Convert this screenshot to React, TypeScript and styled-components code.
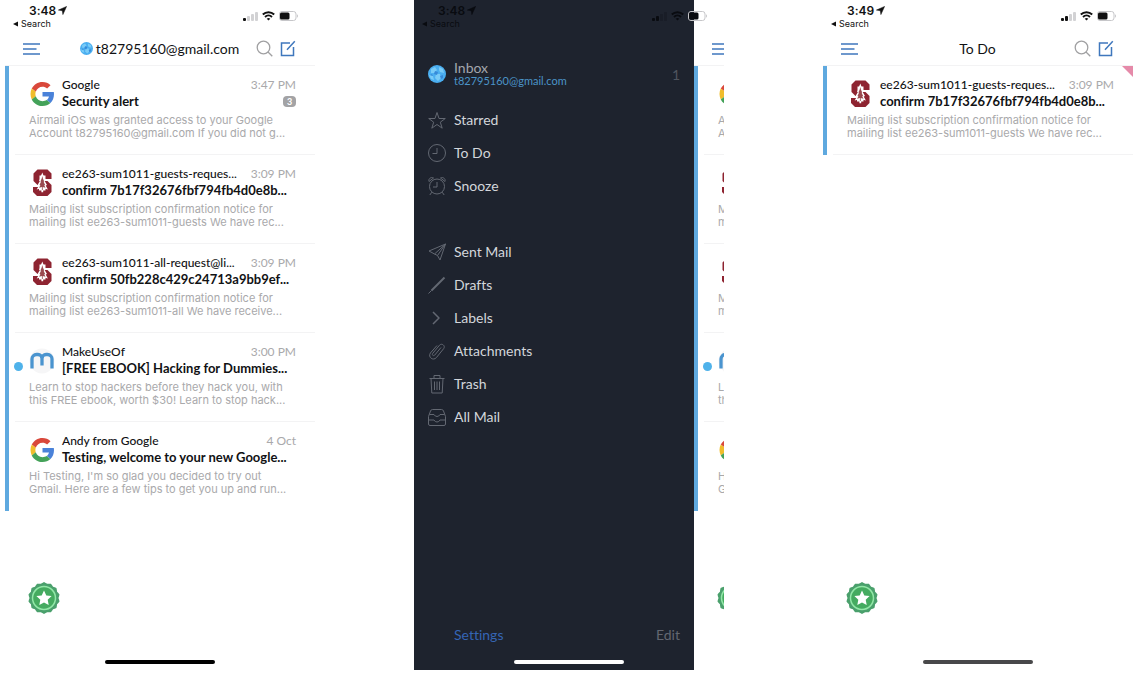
import React from "react";
import styled, { createGlobalStyle } from "styled-components";

const color = {
  accent: "#5fa9df",
  link: "#3f77bd",
  ink: "#111214",
  muted: "#a9a9ab",
  faint: "#f3f3f4",
  drawer: "#1e232e",
  drawerIcon: "#636872",
  drawerText: "#d3d6db",
};

const GlobalStyle = createGlobalStyle`
  *, *::before, *::after { box-sizing: border-box; }
  body {
    margin: 0;
    background: #fff;
    color: ${color.ink};
    font-family: Lato, "Liberation Sans", sans-serif;
    font-variant-ligatures: none;
  }
  ul { list-style: none; margin: 0; padding: 0; }
  button { border: 0; padding: 0; background: none; font: inherit; cursor: pointer; }
  h1, h2, h3, p { margin: 0; font: inherit; }
  svg { display: block; flex-shrink: 0; }
  a { color: inherit; text-decoration: none; }
`;

const Gallery = styled.main`
  display: grid;
  grid-template-columns: repeat(3, minmax(0, 1fr));
  gap: 99px;
  padding: 0 15px 14px 5px;
  min-height: 100vh;
`;

const Phone = styled.section`
  position: relative;
  display: flex;
  min-width: 0;
`;

const Screen = styled.div`
  display: flex;
  flex-direction: column;
  flex: 1 1 0;
  min-width: 0;
`;

const StatusRow = styled.div<{ $overlay?: boolean }>`
  display: flex;
  justify-content: space-between;
  height: 32px;
  padding: 4px 16px 0 8px;
  color: #111;
  font-family: Inter, "Liberation Sans", sans-serif;
  ${(p) => p.$overlay && "position: absolute; inset: 0 0 auto 0; z-index: 2; color: #090b10;"}
`;

const Clock = styled.div`
  display: flex;
  align-items: center;
  gap: 2px;
  padding-left: 16px;
  font-size: 12px;
  font-weight: 600;
  line-height: 13px;
`;

const BackLink = styled.a`
  display: flex;
  align-items: center;
  gap: 3px;
  font-size: 9px;
  line-height: 14px;
`;

const StatusIcons = styled.div`
  display: flex;
  align-items: center;
  gap: 4px;
  height: 24px;
`;

const NavBar = styled.header`
  display: grid;
  grid-template-columns: 50px 1fr 50px;
  align-items: center;
  height: 34px;
  padding: 0 19px 0 18px;
  border-bottom: 1px solid ${color.faint};
`;

const NavTitle = styled.h1`
  display: flex;
  align-items: center;
  justify-content: center;
  gap: 3px;
  font-size: 14px;
  line-height: 20px;
  white-space: nowrap;
`;

const NavActions = styled.div`
  display: flex;
  justify-content: flex-end;
  gap: 7px;
`;

const MessageItem = styled.li`
  position: relative;
  border-left: 4px solid ${color.accent};
`;

const MessageBody = styled.article`
  margin-left: 6px;
  padding: 11px 19px 14px 14px;
  border-bottom: 1px solid ${color.faint};

  ${MessageItem}:last-child:not(:first-child) & {
    border-bottom-color: transparent;
  }
`;

const MessageTop = styled.div`
  display: grid;
  grid-template-columns: 26px minmax(0, 1fr);
  gap: 7px;
  align-items: center;
`;

const Line = styled.div`
  display: flex;
  align-items: center;
  justify-content: space-between;
  gap: 4px;
  line-height: 16px;
  white-space: nowrap;
`;

const Sender = styled.h2`
  font-size: 12px;
  font-weight: 500;
`;

const Subject = styled.h3`
  font-size: 13px;
  font-weight: 700;
  line-height: 17px;
`;

const Time = styled.time`
  color: ${color.muted};
  font-size: 12px;
`;

const Count = styled.span`
  width: 13px;
  height: 11px;
  border-radius: 4px;
  background: #a3a3a5;
  color: #fff;
  font-size: 9px;
  font-weight: 700;
  line-height: 11px;
  text-align: center;
`;

const Snippet = styled.p`
  margin-top: 4px;
  color: ${color.muted};
  font-family: Inter, "Liberation Sans", sans-serif;
  font-size: 11px;
  line-height: 13px;
  white-space: nowrap;
`;

const UnreadDot = styled.span`
  position: absolute;
  left: 5px;
  top: 29px;
  width: 9px;
  height: 9px;
  border-radius: 50%;
  background: #4fb2ea;
`;

const Flag = styled.span`
  position: absolute;
  top: 0;
  right: 0;
  border-top: 11px solid #e58aa9;
  border-left: 11px solid transparent;
`;

const ScreenFoot = styled.footer`
  display: flex;
  margin-top: auto;
  padding: 0 0 56px 23px;
`;

const HomeBar = styled.span<{ $tone: string }>`
  position: absolute;
  left: 50%;
  bottom: 6px;
  z-index: 2;
  width: 110px;
  height: 4px;
  margin-left: -55px;
  border-radius: 2px;
  background: ${(p) => p.$tone};
`;

const Drawer = styled.nav`
  display: flex;
  flex-direction: column;
  flex: 0 0 280px;
  padding: 59px 14px 25px;
  background: ${color.drawer};
  color: ${color.drawerText};
`;

const Account = styled.a`
  display: grid;
  grid-template-columns: 18px 1fr auto;
  align-items: center;
  gap: 8px;
  height: 30px;
  margin-bottom: 14px;
`;

const AccountName = styled.span`
  display: block;
  color: #a3a6ad;
  font-size: 14px;
  line-height: 14px;
`;

const AccountMail = styled.span`
  display: block;
  color: #4b94c8;
  font-size: 11px;
  line-height: 12px;
`;

const AccountCount = styled.span`
  color: #50555f;
  font-size: 14px;
`;

const Folders = styled.ul`
  & + & { margin-top: 33px; }
`;

const FolderLink = styled.a`
  display: flex;
  align-items: center;
  gap: 8px;
  height: 33px;
  font-size: 14px;
  line-height: 18px;
`;

const DrawerFoot = styled.div`
  display: flex;
  justify-content: space-between;
  margin-top: auto;
  padding-left: 26px;
  font-size: 14px;
  line-height: 20px;
`;

const DrawerButton = styled.button<{ $tone: string }>`
  color: ${(p) => p.$tone};
`;

const Peek = styled.div`
  display: flex;
  flex-direction: column;
  flex: 1 1 0;
  min-width: 0;
  overflow: hidden;
  padding-top: 32px;
`;

const PeekNav = styled.header`
  display: flex;
  align-items: center;
  height: 34px;
  padding-left: 18px;
  border-bottom: 1px solid ${color.faint};
`;

const PeekBody = styled(MessageBody)`
  padding-right: 0;
`;

const PeekLogo = styled.div`
  display: flex;
  align-items: center;
  height: 33px;
`;

/* ---------- drawings ---------- */

const LocationArrow = () => (
  <svg width="9" height="9" viewBox="0 0 9 9" aria-hidden="true">
    <path d="M8.6.4 4.9 8.6 4.3 4.7.4 4.1Z" fill="currentColor" stroke="currentColor" strokeWidth=".5" />
  </svg>
);

const BackTriangle = () => (
  <svg width="5" height="6" viewBox="0 0 5 6" aria-hidden="true">
    <path d="M5 .4v5.2L0 3Z" fill="currentColor" />
  </svg>
);

const Signal = ({ bars, off }: { bars: number; off: string }) => (
  <svg width="15" height="9" viewBox="0 0 15 9" aria-hidden="true">
    {[0, 1, 2, 3].map((i) => (
      <rect key={i} x={i * 4} y={6 - i * 2} width="3" height={3 + i * 2} rx="1" fill={i < bars ? "currentColor" : off} />
    ))}
  </svg>
);

const Wifi = () => (
  <svg width="13" height="10" viewBox="0 0 13 10" aria-hidden="true" fill="none" stroke="currentColor" strokeWidth="1.9">
    <path d="M.8 3.5a8.2 8.2 0 0 1 11.4 0" />
    <path d="M3 6a5 5 0 0 1 7 0" />
    <path d="M6.5 9.6 4.7 7.8a2.6 2.6 0 0 1 3.6 0Z" fill="currentColor" stroke="none" />
  </svg>
);

const Battery = () => (
  <svg width="20" height="10" viewBox="0 0 20 10" aria-hidden="true">
    <rect x=".5" y=".5" width="16.5" height="9" rx="2.5" fill="none" stroke="#c6c6c9" />
    <rect x="1" y="1.5" width="9.5" height="7" rx="1.5" fill="currentColor" />
    <path d="M18.2 3.3v3.4c1-.4 1-3 0-3.4Z" fill="#b5b5b8" />
  </svg>
);

const MenuIcon = () => (
  <svg width="17" height="12" viewBox="0 0 17 12" stroke={color.link} strokeWidth="1.4" aria-hidden="true">
    <path d="M0 1h17M0 6h13.5M0 11h17" />
  </svg>
);

const SearchIcon = () => (
  <svg width="17" height="17" viewBox="0 0 17 17" fill="none" stroke="#a0a0a2" strokeWidth="1.3" aria-hidden="true">
    <circle cx="7.5" cy="7.5" r="6.3" />
    <path d="m12 12 4.3 4.3" />
  </svg>
);

const ComposeIcon = () => (
  <svg width="16" height="17" viewBox="0 0 16 17" fill="none" stroke={color.link} strokeWidth="1.5" aria-hidden="true">
    <path d="M10 3H1.5v12.5h12V7" />
    <path d="M14.8 1.3 7 9.8" />
  </svg>
);

const Globe = ({ size }: { size: number }) => (
  <svg width={size} height={size} viewBox="0 0 18 18" aria-hidden="true">
    <circle cx="9" cy="9" r="9" fill="#4aaef0" />
    <path d="M3 4l4-2 2 3-3 3-3 0ZM11 2l4 2 1 4-4-1-1-2ZM8 9l4 0 1 4-3 3-3-3ZM1 10l4 1 1 4-3-1Z" fill="#79cbf7" />
    <path d="M7 6l3 1-1 3-3-1ZM12 11l3-1 0 3-2 1ZM4 9l1 2-3-1Z" fill="#3789d8" />
  </svg>
);

const GoogleLogo = () => (
  <svg width="26" height="26" viewBox="-3 -2 52 52" aria-hidden="true">
    <path fill="#d9483b" d="M24 9.5c3.54 0 6.71 1.22 9.21 3.6l6.85-6.85C35.9 2.38 30.47 0 24 0 14.62 0 6.51 5.38 2.56 13.22l7.98 6.19C12.43 13.72 17.74 9.5 24 9.5z" />
    <path fill="#4a82d9" d="M46.98 24.55c0-1.57-.15-3.09-.38-4.55H24v9.02h12.94c-.58 2.96-2.26 5.48-4.78 7.18l7.73 6c4.51-4.18 7.09-10.36 7.09-17.65z" />
    <path fill="#f0bd2c" d="M10.53 28.59c-.48-1.45-.76-2.99-.76-4.59s.27-3.14.76-4.59l-7.98-6.19C.92 16.46 0 20.12 0 24s.92 7.54 2.56 10.78l7.97-6.19z" />
    <path fill="#44a259" d="M24 48c6.48 0 11.93-2.13 15.89-5.81l-7.73-6c-2.15 1.45-4.92 2.3-8.16 2.3-6.26 0-11.57-4.22-13.47-9.91l-7.98 6.19C6.51 42.62 14.62 48 24 48z" />
  </svg>
);

const StanfordLogo = () => (
  <svg width="26" height="28" viewBox="0 0 26 28" aria-hidden="true">
    <path
      d="M8.5.5h10l4 4v5.500h-6V6.500h-6v4l1.500 1.500h6.500l4 4v7l-4 4H8l-4-4v-5h6v3.500h6.500v-4L15 16H8.500l-4-4V4.500Z"
      fill="#8e2431"
    />
    <path d="m13.300 3.500 1.600 4-.5.3 2.300 4-1 .3 2.300 4-1.300.4 2.200 4-4.700-1.200v4h-1.800v-4L7.700 20.500l2.200-4-1.300-.4 2.300-4-1-.3 2.300-4-.5-.3Z" fill="#fff" />
    <path d="m13.300 7 .6 2.500 1.300 3-.6.3 1.500 3.300-.9.200 1.300 2.500-2.800-.7v3h-.8v-3l-2.800.7 1.300-2.500-.9-.2 1.500-3.300-.6-.3 1.300-3Z" fill="#9a4a50" />
  </svg>
);

const MakeUseOfLogo = () => (
  <svg width="26" height="26" viewBox="0 0 26 26" aria-hidden="true">
    <circle cx="13" cy="13" r="12.5" fill="#f6f6f7" />
    <path
      d="M3 20.500V11a4.500 4.500 0 0 1 4.500-4.500H9a4 4 0 0 1 4 4v7V10.500a4 4 0 0 1 4-4h1.500a4.500 4.500 0 0 1 4.500 4.500v9.500"
      fill="none"
      stroke="#4a94cf"
      strokeWidth="3.300"
    />
  </svg>
);

const Seal = () => {
  const points = Array.from({ length: 56 }, (_, i) => {
    const a = (i / 56) * Math.PI * 2;
    const r = 15.2 + 0.7 * Math.cos(a * 14);
    return `${16 + r * Math.sin(a)},${16 - r * Math.cos(a)}`;
  }).join(" ");
  return (
    <svg width="32" height="32" viewBox="0 0 32 32" aria-hidden="true">
      <polygon points={points} fill="#4aa06c" />
      <circle cx="16" cy="16" r="11.5" fill="#45ab60" stroke="#93e8a8" strokeWidth="1.500" />
      <path d="m16 8.500 2.300 4.900 5.300.7-3.900 3.700 1 5.300-4.700-2.600-4.700 2.600 1-5.300-3.900-3.700 5.300-.7Z" fill="#fff" />
    </svg>
  );
};

const FolderSvg = ({ children }: { children: React.ReactNode }) => (
  <svg
    width="18"
    height="20"
    viewBox="0 0 18 20"
    fill="none"
    stroke={color.drawerIcon}
    strokeWidth="1"
    strokeLinejoin="round"
    aria-hidden="true"
  >
    {children}
  </svg>
);

const folderIcons: Record<string, React.ReactNode> = {
  Starred: <path d="m9 2.500 2 6h6.300l-5 3.700 1.900 6L9 14.500l-5.200 3.700 1.900-6-5-3.700H7Z" />,
  "To Do": (
    <>
      <circle cx="9" cy="10" r="8.500" />
      <path d="M9 5v5.500H4.500" />
    </>
  ),
  Snooze: (
    <>
      <circle cx="9" cy="10.500" r="7.500" />
      <path d="M9 6v5H5M3.800 16.200 1.800 19M14.200 16.200l2 2.800M1 5.500C0 3 3 .5 5.500 2ZM17 5.500C18 3 15 .5 12.500 2Z" />
    </>
  ),
  "Sent Mail": <path d="M17.500 2 1 9l5.500 3L17.500 2l-5.500 16-2.500-4.500M6.500 12l3 1.500L17.500 2" />,
  Drafts: (
    <>
      <path d="M16.500 2.500 3.500 15.500" strokeWidth="2" />
      <path d="m3.500 15.500-3 3" />
    </>
  ),
  Labels: <path d="m5 4 6 6-6 6" strokeWidth="1.500" />,
  Attachments: (
    <path d="M13 6.500 6.800 14c-1.300 1.500-3.300 0-2.100-1.600l6.800-8.200c2.200-2.500 6.300.5 4.200 3.400l-7.300 9c-3.200 3.600-8.800-.3-6-4.600L9 4.500" />
  ),
  Trash: (
    <path d="M1.500 4.500h15M6 4.500v-3h6v3M3 4.500l.8 14.500h10.400L15 4.500M6.500 7.500v8.500M9 7.500v8.500M11.500 7.500v8.500" />
  ),
  "All Mail": (
    <path d="M.5 9.500 2.500 4Q3 2.500 4.500 2.500h9Q15 2.500 15.500 4l2 5.500V17q0 1.500-1.500 1.500H2Q.5 18.500.5 17ZM.5 13H6q1 2 3 2t3-2h5.500M1.500 7.500H6q1 2 3 2t3-2h4.500" />
  ),
};

/* ---------- data ---------- */

type Message = {
  logo: React.ReactNode;
  sender: string;
  subject: string;
  time: string;
  lines: [string, string];
  edge: [string, string];
  count?: number;
  unread?: boolean;
  flagged?: boolean;
};

const guests: Message = {
  logo: <StanfordLogo />,
  sender: "ee263-sum1011-guests-reques...",
  subject: "confirm 7b17f32676fbf794fb4d0e8b...",
  time: "3:09 PM",
  lines: ["Mailing list subscription confirmation notice for", "mailing list ee263-sum1011-guests We have rec..."],
  edge: ["M", "m"],
};

const inbox: Message[] = [
  {
    logo: <GoogleLogo />,
    sender: "Google",
    subject: "Security alert",
    time: "3:47 PM",
    lines: ["Airmail iOS was granted access to your Google", "Account t82795160@gmail.com If you did not g..."],
    edge: ["A", "A"],
    count: 3,
  },
  guests,
  {
    logo: <StanfordLogo />,
    sender: "ee263-sum1011-all-request@li...",
    subject: "confirm 50fb228c429c24713a9bb9ef...",
    time: "3:09 PM",
    lines: ["Mailing list subscription confirmation notice for", "mailing list ee263-sum1011-all We have receive..."],
    edge: ["M", "m"],
  },
  {
    logo: <MakeUseOfLogo />,
    sender: "MakeUseOf",
    subject: "[FREE EBOOK] Hacking for Dummies...",
    time: "3:00 PM",
    lines: ["Learn to stop hackers before they hack you, with", "this FREE ebook, worth $30! Learn to stop hack..."],
    edge: ["L", "th"],
    unread: true,
  },
  {
    logo: <GoogleLogo />,
    sender: "Andy from Google",
    subject: "Testing, welcome to your new Google...",
    time: "4 Oct",
    lines: ["Hi Testing, I'm so glad you decided to try out", "Gmail. Here are a few tips to get you up and run..."],
    edge: ["H", "G"],
  },
];

const todo: Message[] = [{ ...guests, flagged: true }];

const folderGroups = [
  ["Starred", "To Do", "Snooze"],
  ["Sent Mail", "Drafts", "Labels", "Attachments", "Trash", "All Mail"],
];

/* ---------- parts ---------- */

const StatusBar = ({ time, bars, overlay }: { time: string; bars: number; overlay?: boolean }) => (
  <StatusRow $overlay={overlay}>
    <div>
      <Clock>
        {time} <LocationArrow />
      </Clock>
      <BackLink href="#search">
        <BackTriangle /> Search
      </BackLink>
    </div>
    <StatusIcons>
      <Signal bars={bars} off={overlay ? "#191d27" : "#d2d2d4"} />
      <Wifi />
      <Battery />
    </StatusIcons>
  </StatusRow>
);

const Rewards = () => (
  <ScreenFoot>
    <button type="button" aria-label="Rewards">
      <Seal />
    </button>
  </ScreenFoot>
);

const MailView = ({ title, messages }: { title: React.ReactNode; messages: Message[] }) => (
  <>
    <NavBar>
      <button type="button" aria-label="Menu">
        <MenuIcon />
      </button>
      <NavTitle>{title}</NavTitle>
      <NavActions>
        <button type="button" aria-label="Search mail">
          <SearchIcon />
        </button>
        <button type="button" aria-label="Compose">
          <ComposeIcon />
        </button>
      </NavActions>
    </NavBar>
    <ul>
      {messages.map((m) => (
        <MessageItem key={m.subject}>
          {m.unread && <UnreadDot />}
          {m.flagged && <Flag />}
          <MessageBody>
            <MessageTop>
              {m.logo}
              <div>
                <Line>
                  <Sender>{m.sender}</Sender>
                  <Time>{m.time}</Time>
                </Line>
                <Line>
                  <Subject>{m.subject}</Subject>
                  {m.count && <Count>{m.count}</Count>}
                </Line>
              </div>
            </MessageTop>
            <Snippet>
              {m.lines[0]}
              <br />
              {m.lines[1]}
            </Snippet>
          </MessageBody>
        </MessageItem>
      ))}
    </ul>
    <Rewards />
  </>
);

/* The sliver of the inbox left visible beside the open drawer. */
const MailEdge = ({ messages }: { messages: Message[] }) => (
  <Peek>
    <PeekNav>
      <button type="button" aria-label="Close menu">
        <MenuIcon />
      </button>
    </PeekNav>
    <ul>
      {messages.map((m) => (
        <MessageItem key={m.subject}>
          {m.unread && <UnreadDot />}
          <PeekBody>
            <PeekLogo>{m.logo}</PeekLogo>
            <Snippet>
              {m.edge[0]}
              <br />
              {m.edge[1]}
            </Snippet>
          </PeekBody>
        </MessageItem>
      ))}
    </ul>
    <Rewards />
  </Peek>
);

export default function App() {
  return (
    <>
      <GlobalStyle />
      <Gallery>
        <Phone>
          <Screen>
            <StatusBar time="3:48" bars={1} />
            <MailView
              title={
                <>
                  <Globe size={13} />
                  t82795160@gmail.com
                </>
              }
              messages={inbox}
            />
          </Screen>
          <HomeBar $tone="#000" />
        </Phone>

        <Phone>
          <StatusBar time="3:48" bars={2} overlay />
          <Drawer>
            <Account href="#inbox">
              <Globe size={18} />
              <span>
                <AccountName>Inbox</AccountName>
                <AccountMail>t82795160@gmail.com</AccountMail>
              </span>
              <AccountCount>1</AccountCount>
            </Account>
            {folderGroups.map((group) => (
              <Folders key={group[0]}>
                {group.map((name) => (
                  <li key={name}>
                    <FolderLink href="#folder">
                      <FolderSvg>{folderIcons[name]}</FolderSvg>
                      {name}
                    </FolderLink>
                  </li>
                ))}
              </Folders>
            ))}
            <DrawerFoot>
              <DrawerButton type="button" $tone="#3565b5">
                Settings
              </DrawerButton>
              <DrawerButton type="button" $tone="#636771">
                Edit
              </DrawerButton>
            </DrawerFoot>
          </Drawer>
          <MailEdge messages={inbox} />
          <HomeBar $tone="#fff" />
        </Phone>

        <Phone>
          <Screen>
            <StatusBar time="3:49" bars={2} />
            <MailView title="To Do" messages={todo} />
          </Screen>
          <HomeBar $tone="#48484a" />
        </Phone>
      </Gallery>
    </>
  );
}
